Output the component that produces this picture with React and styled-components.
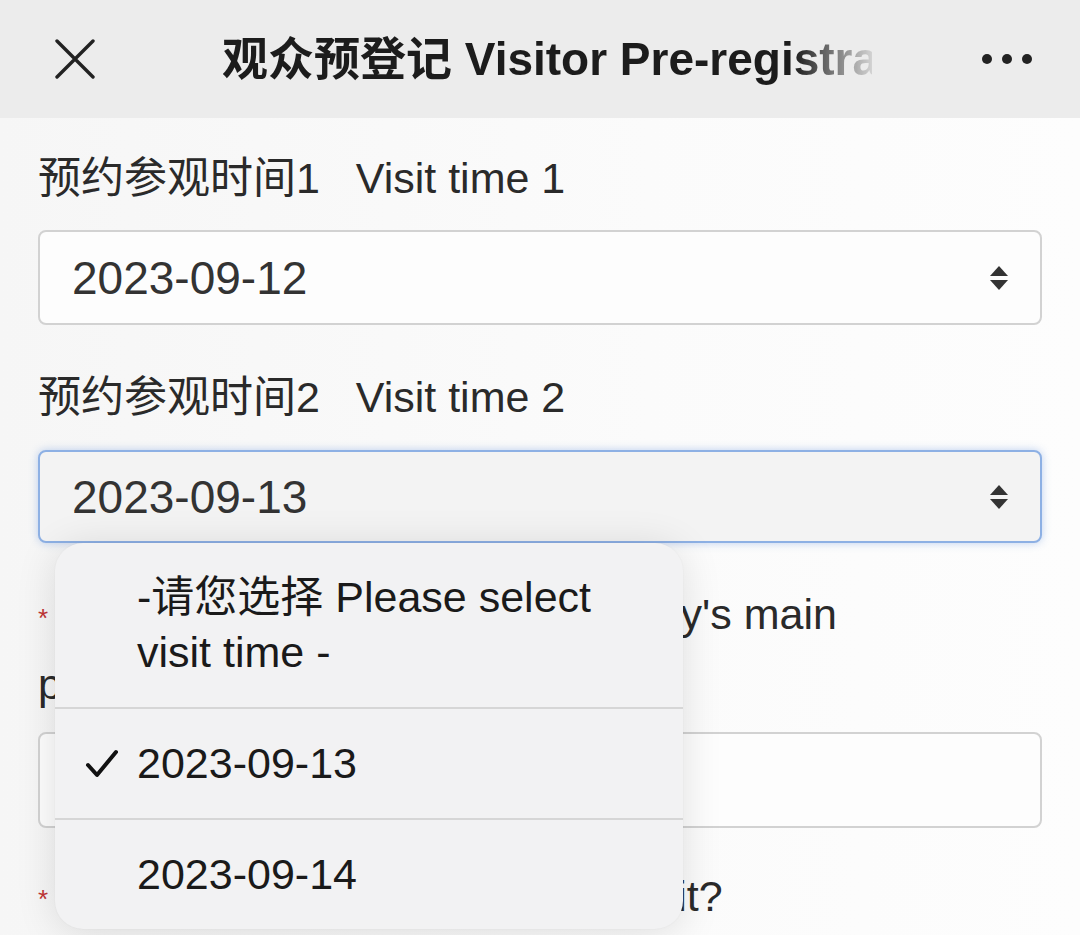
import React from "react";
import styled, { createGlobalStyle } from "styled-components";

const Global = createGlobalStyle`
  html, body { margin: 0; padding: 0; }
  body {
    background: #fafafa;
    font-family: "Liberation Sans", "Noto Sans CJK SC", sans-serif;
    color: #2b2b2b;
    width: 1080px;
    height: 935px;
    overflow: hidden;
  }
`;

const Page = styled.div`
  width: 1080px;
  height: 935px;
  overflow: hidden;
  display: flex;
  flex-direction: column;
  background: linear-gradient(90deg, #f6f6f6 0%, #fbfbfb 60%, #fdfdfd 100%);
`;

const TopBar = styled.header`
  height: 118px;
  flex: none;
  background: #ececec;
  display: flex;
  align-items: center;
  padding: 0 48px 0 55px;
`;

const IconButton = styled.div`
  width: ${(p) => p.$w}px;
  height: 44px;
  display: flex;
  align-items: center;
  justify-content: center;
  flex: none;
`;

const Title = styled.div`
  flex: none;
  width: 650px;
  margin-left: 127px;
  margin-right: auto;
  font-size: 46px;
  font-weight: 600;
  color: #1c1c1c;
  white-space: nowrap;
  overflow: hidden;
  line-height: 60px;
  -webkit-mask-image: linear-gradient(90deg, #000 88%, rgba(0,0,0,0.12) 100%);
  mask-image: linear-gradient(90deg, #000 88%, rgba(0,0,0,0.12) 100%);
`;

const Form = styled.div`
  position: relative;
  padding: 0 38px;
  display: flex;
  flex-direction: column;
`;

const Field = styled.div`
  display: flex;
  flex-direction: column;
  margin-top: ${(p) => p.$top}px;
`;

const Label = styled.div`
  font-size: 43px;
  line-height: ${(p) => p.$lh || 60}px;
  color: #2a2a2a;
  margin-bottom: ${(p) => p.$gap}px;
  max-width: ${(p) => p.$max || "none"};
  white-space: pre-wrap;
`;

const Required = styled.span`
  color: #c03434;
  font-size: 26px;
  vertical-align: middle;
  margin-right: 8px;
`;

const SelectBox = styled.div`
  height: ${(p) => p.$h}px;
  box-sizing: border-box;
  border: 2px solid ${(p) => (p.$focus ? "#8db0e4" : "#d2d2d2")};
  border-radius: 8px;
  background: ${(p) => (p.$focus ? "#f3f3f3" : "#fdfdfd")};
  box-shadow: ${(p) => (p.$focus ? "0 0 8px rgba(110,155,225,0.45)" : "none")};
  display: flex;
  align-items: center;
  justify-content: space-between;
  padding: 0 30px 0 32px;
  font-size: 46px;
  color: #333;
`;

const Arrows = () => (
  <svg width="22" height="26" viewBox="0 0 22 26">
    <path d="M11 1 L20 11 L2 11 Z" fill="#333" />
    <path d="M11 25 L20 15 L2 15 Z" fill="#333" />
  </svg>
);

const Popup = styled.div`
  position: absolute;
  left: 55px;
  top: 425px;
  width: 628px;
  background: #f2f2f3;
  border-radius: 28px;
  box-shadow: 0 4px 40px rgba(0, 0, 0, 0.12), 0 0 2px rgba(0,0,0,0.05);
  display: flex;
  flex-direction: column;
  overflow: hidden;
`;

const Option = styled.div`
  display: flex;
  align-items: center;
  padding: 27px 60px 27px 30px;
  font-size: 43px;
  line-height: 55px;
  color: #1a1a1a;
  border-top: ${(p) => (p.$first ? "none" : "2px solid #d6d6d6")};
`;

const CheckSlot = styled.div`
  width: 52px;
  flex: none;
  display: flex;
  align-items: center;
`;

const Check = () => (
  <svg width="34" height="30" viewBox="0 0 34 30">
    <path d="M3 16 L12 26 L31 3" fill="none" stroke="#111" strokeWidth="4" strokeLinecap="round" strokeLinejoin="round" />
  </svg>
);

export default function App() {
  return (
    <>
      <Global />
      <Page>
        <TopBar>
          <IconButton $w={40}>
            <svg width="40" height="40" viewBox="0 0 40 40">
              <path d="M2 2 L38 38 M38 2 L2 38" stroke="#222" strokeWidth="3.4" strokeLinecap="round" />
            </svg>
          </IconButton>
          <Title>观众预登记 Visitor Pre-registration</Title>
          <IconButton $w={50}>
            <svg width="50" height="12" viewBox="0 0 50 12">
              <circle cx="5" cy="6" r="5" fill="#222" />
              <circle cx="25" cy="6" r="5" fill="#222" />
              <circle cx="45" cy="6" r="5" fill="#222" />
            </svg>
          </IconButton>
        </TopBar>
        <Form>
          <Field $top={30}>
            <Label $gap={22}>{"预约参观时间1   Visit time 1"}</Label>
            <SelectBox $h={95}>
              <span>2023-09-12</span>
              <Arrows />
            </SelectBox>
          </Field>
          <Field $top={42}>
            <Label $gap={23}>{"预约参观时间2   Visit time 2"}</Label>
            <SelectBox $h={93} $focus>
              <span>2023-09-13</span>
              <Arrows />
            </SelectBox>
          </Field>
          <Field $top={38}>
            <Label $gap={15} $lh={66} $max="830px">
              <Required>*</Required>
              {"您此次参观的主要目的 Your today's main purpose of visit?"}
            </Label>
            <SelectBox $h={96}>
              <span></span>
            </SelectBox>
          </Field>
          <Field $top={38}>
            <Label $gap={0}>
              <Required>*</Required>
              {"您是否首次参观 Is it your first visit?"}
            </Label>
          </Field>
          <Popup>
            <Option $first>
              <CheckSlot />
              <span>-请您选择 Please select visit time -</span>
            </Option>
            <Option>
              <CheckSlot>
                <Check />
              </CheckSlot>
              <span>2023-09-13</span>
            </Option>
            <Option>
              <CheckSlot />
              <span>2023-09-14</span>
            </Option>
          </Popup>
        </Form>
      </Page>
    </>
  );
}
